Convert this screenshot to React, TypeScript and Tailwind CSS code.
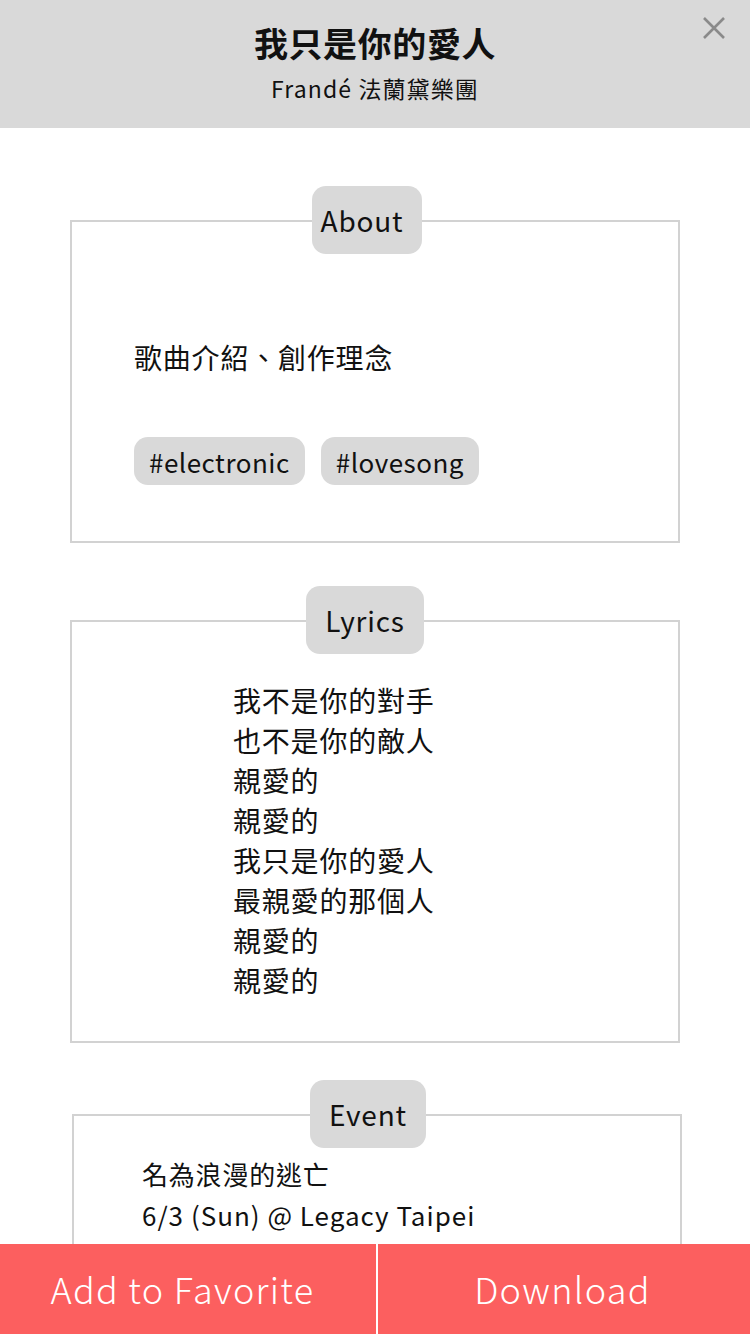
import React from 'react';

const font = { fontFamily: '"Noto Sans CJK TC", "Noto Sans", sans-serif' };

const lyrics = [
  '我不是你的對手',
  '也不是你的敵人',
  '親愛的',
  '親愛的',
  '我只是你的愛人',
  '最親愛的那個人',
  '親愛的',
  '親愛的',
];

const tags = ['#electronic', '#lovesong'];

const Section: React.FC<{
  label: string;
  labelClass: string;
  boxClass: string;
  children: React.ReactNode;
}> = ({ label, labelClass, boxClass, children }) => (
  <section className="relative pt-[34px]">
    <div
      className={`absolute top-0 h-[68px] flex items-center justify-center rounded-[14px] bg-[#d9d9d9] text-[28px] tracking-[0.8px] text-[#111] ${labelClass}`}
    >
      {label}
    </div>
    <div className={`border-2 border-[#d2d2d2] ${boxClass}`}>{children}</div>
  </section>
);

export default function App() {
  return (
    <div className="min-h-[1334px] bg-white text-[#111]" style={font}>
      <header className="relative h-[128px] bg-[#d9d9d9] flex flex-col items-center pt-[21px]">
        <h1 className="text-[34px] font-bold leading-[44px] tracking-[0.6px]">我只是你的愛人</h1>
        <p className="mt-[6px] text-[23px] leading-[34px] tracking-[1.1px]">Frandé 法蘭黛樂團</p>
        <button className="absolute right-[24px] top-[16px] w-[24px] h-[24px]" aria-label="close">
          <svg viewBox="0 0 24 24" className="w-[24px] h-[24px]" stroke="#8a8a8a" strokeWidth="2.6" fill="none">
            <path d="M2 2 L22 22 M22 2 L2 22" />
          </svg>
        </button>
      </header>

      <main className="pt-[58px] pb-[140px] tracking-[0.8px]">
        <div className="mx-[70px]">
          <Section label="About" labelClass="left-[242px] w-[110px] pl-[4px] pr-[14px]" boxClass="h-[323px] pl-[62px] pt-[115px]">
            <p className="text-[28px] leading-[40px]">歌曲介紹、創作理念</p>
            <div className="mt-[60px] flex gap-[16px]">
              {tags.map(t => (
                <span
                  key={t}
                  className="h-[48px] px-[15px] flex items-center rounded-[14px] bg-[#d9d9d9] text-[26px] tracking-[0.5px]"
                >
                  {t}
                </span>
              ))}
            </div>
          </Section>
        </div>

        <div className="mx-[70px] mt-[43px]">
          <Section label="Lyrics" labelClass="left-[236px] w-[118px]" boxClass="h-[423px] pl-[161px] pt-[58px]">
            {lyrics.map((l, i) => (
              <p key={i} className="text-[28px] leading-[40px]">
                {l}
              </p>
            ))}
          </Section>
        </div>

        <div className="ml-[72px] mr-[68px] mt-[37px]">
          <Section label="Event" labelClass="left-[238px] w-[116px]" boxClass="h-[260px] pl-[68px] pt-[37px]">
            <p className="text-[26px] leading-[41px]">名為浪漫的逃亡</p>
            <p className="text-[26px] leading-[41px] tracking-[1px]">6/3 (Sun) @ Legacy Taipei</p>
          </Section>
        </div>
      </main>

      <footer className="fixed bottom-0 left-0 right-0 h-[90px] flex bg-white">
        <button className="w-[376px] h-full pb-[3px] pr-[11px] bg-[#fc5f5f] text-white text-[36px] font-light tracking-[1.3px]">
          Add to Favorite
        </button>
        <div className="w-[2px]" />
        <button className="flex-1 h-full pb-[3px] pr-[3px] bg-[#fc5f5f] text-white text-[36px] font-light tracking-[1.3px]">
          Download
        </button>
      </footer>
    </div>
  );
}
